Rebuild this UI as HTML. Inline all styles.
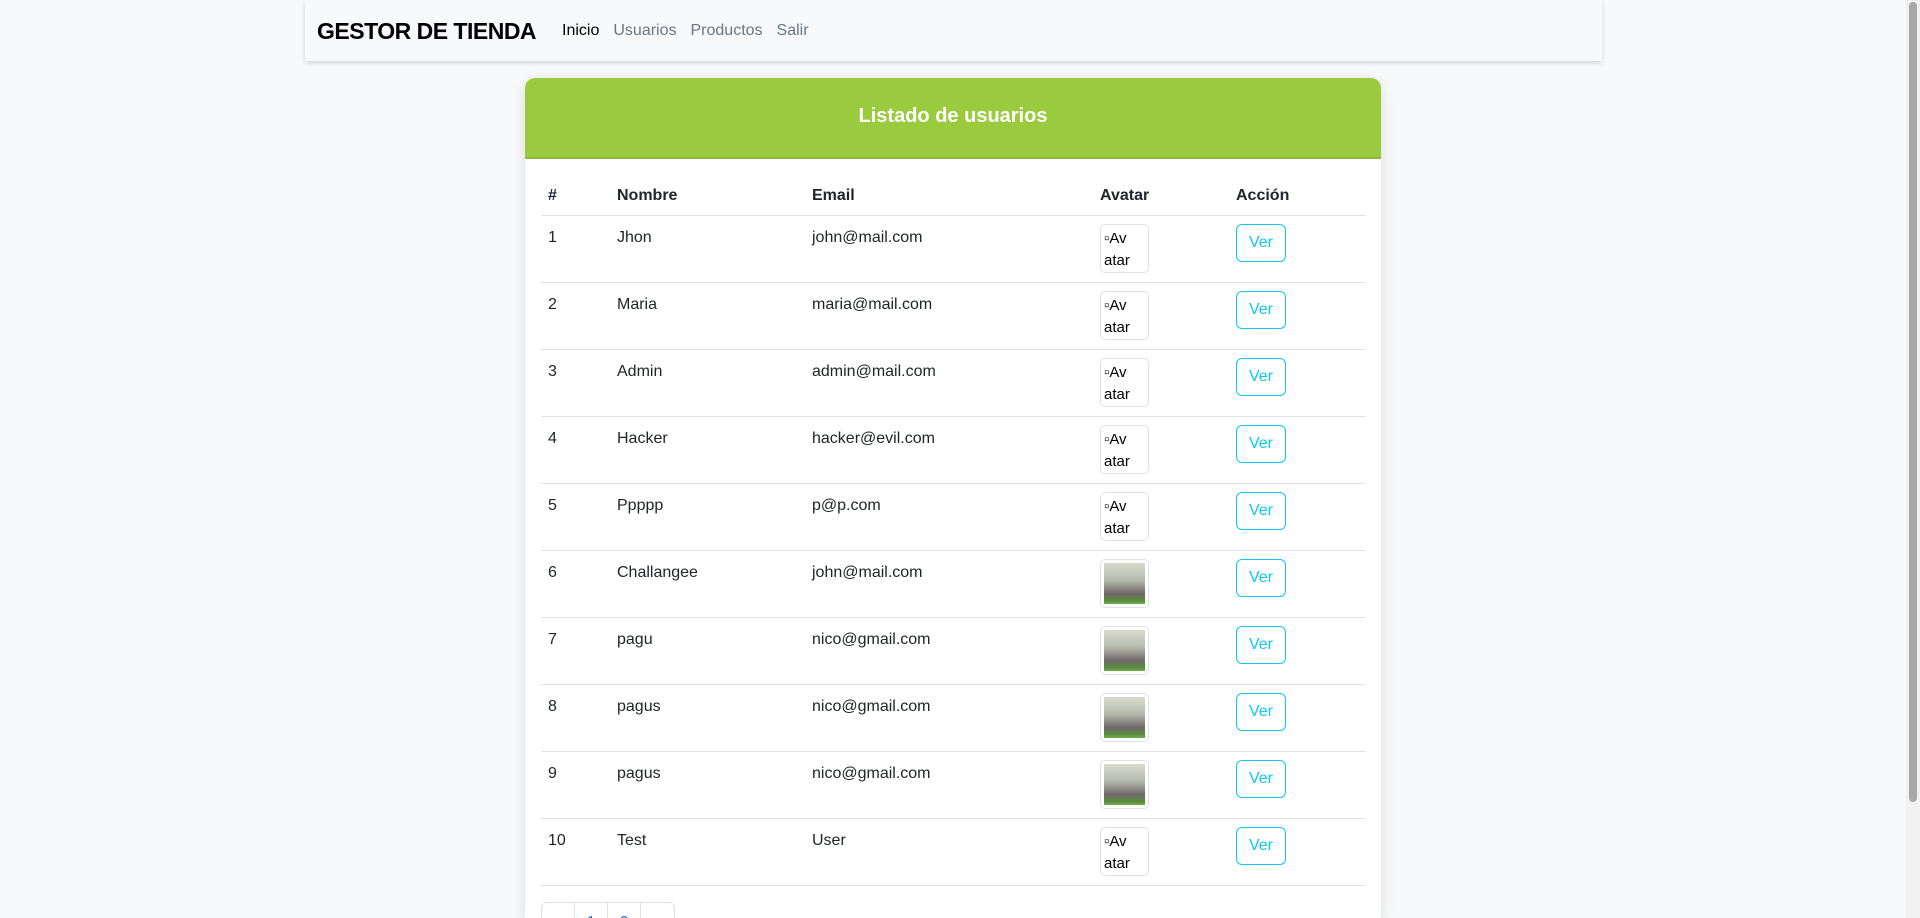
<!DOCTYPE html>
<html style="overflow:hidden;height:918px"><head><meta charset="utf-8"><style>
*{box-sizing:border-box}
body{margin:0;width:1920px;height:918px;overflow:hidden;background:#f8f9fa;font-family:"Liberation Sans",sans-serif;color:#212529;position:relative}
.nav{position:absolute;left:305px;top:0;width:1297px;height:61px;background:#f8f9fa;box-shadow:0 2px 5px rgba(0,0,0,.15);}
.brand{position:absolute;left:12px;top:18px;font-size:23px;font-weight:bold;color:#000;letter-spacing:-0.5px}
.links{position:absolute;left:257px;top:22px;font-size:16px;color:#6c757d}
.links span{margin-right:14px}
.card{position:absolute;left:525px;top:78px;width:856px;height:840px;background:#fff;border-radius:10px 10px 0 0;box-shadow:0 4px 14px rgba(0,0,0,.12);overflow:hidden}
.head{height:81px;background:#9acb3f;color:#fff;font-size:20px;font-weight:bold;text-align:center;line-height:76px;border-bottom:2px solid #8bb838}
table{position:absolute;left:16px;top:97px;width:824px;border-collapse:collapse;font-size:16px}
th{text-align:left;font-weight:bold;height:40px;padding:3px 7px 0;border-bottom:1px solid #dee2e6;vertical-align:middle}
td{height:67px;vertical-align:top;padding:13px 7px 0;border-bottom:1px solid #dee2e6}
.av{width:49px;height:49px;border:1px solid #dee2e6;border-radius:5px;padding:3px;margin-top:-5px;overflow:hidden;font-size:15px;line-height:22px;color:#000}
.av .tr{width:41px;height:41px;background:linear-gradient(#d8dbcc 0%,#b9bdb0 40%,#6e6868 75%,#5a8d3c 92%,#6db04a 100%)}
.btn{display:inline-block;width:50px;height:38px;border:1px solid #0dcaf0;border-radius:6px;color:#0dcaf0;text-align:center;line-height:36px;font-size:16px;margin-top:-5px}
.pg{position:absolute;left:16px;top:824px;display:flex;border:1px solid #dee2e6;border-radius:6px;height:40px}
.pg div{width:33px;border-right:1px solid #dee2e6;text-align:center;padding-top:10px;color:#0d6efd;font-size:15px}
.pg div:last-child{border-right:none}
.sb{position:absolute;right:0;top:0;width:14px;height:918px;background:#f1f1f1}
.sb div{position:absolute;left:3px;top:2px;width:8px;height:800px;background:#a8a8a8;border-radius:4px}
</style></head><body>
<div class="nav"><div class="brand">GESTOR DE TIENDA</div><div class="links"><span style="color:#000">Inicio</span><span>Usuarios</span><span>Productos</span><span>Salir</span></div></div>
<div class="card"><div class="head">Listado de usuarios</div>
<table>
<tr><th style="width:69px">#</th><th style="width:195px">Nombre</th><th style="width:288px">Email</th><th style="width:136px">Avatar</th><th>Acción</th></tr>
<tr><td>1</td><td>Jhon</td><td>john@mail.com</td><td><div class="av">▫Av atar</div></td><td><span class="btn">Ver</span></td></tr>
<tr><td>2</td><td>Maria</td><td>maria@mail.com</td><td><div class="av">▫Av atar</div></td><td><span class="btn">Ver</span></td></tr>
<tr><td>3</td><td>Admin</td><td>admin@mail.com</td><td><div class="av">▫Av atar</div></td><td><span class="btn">Ver</span></td></tr>
<tr><td>4</td><td>Hacker</td><td>hacker@evil.com</td><td><div class="av">▫Av atar</div></td><td><span class="btn">Ver</span></td></tr>
<tr><td>5</td><td>Ppppp</td><td>p@p.com</td><td><div class="av">▫Av atar</div></td><td><span class="btn">Ver</span></td></tr>
<tr><td>6</td><td>Challangee</td><td>john@mail.com</td><td><div class="av"><div class="tr"></div></div></td><td><span class="btn">Ver</span></td></tr>
<tr><td>7</td><td>pagu</td><td>nico@gmail.com</td><td><div class="av"><div class="tr"></div></div></td><td><span class="btn">Ver</span></td></tr>
<tr><td>8</td><td>pagus</td><td>nico@gmail.com</td><td><div class="av"><div class="tr"></div></div></td><td><span class="btn">Ver</span></td></tr>
<tr><td>9</td><td>pagus</td><td>nico@gmail.com</td><td><div class="av"><div class="tr"></div></div></td><td><span class="btn">Ver</span></td></tr>
<tr><td>10</td><td>Test</td><td>User</td><td><div class="av">▫Av atar</div></td><td><span class="btn">Ver</span></td></tr>
</table>
<div class="pg"><div>«</div><div>1</div><div>2</div><div>»</div></div>
</div>
<div class="sb"><div></div></div>
</body></html>
